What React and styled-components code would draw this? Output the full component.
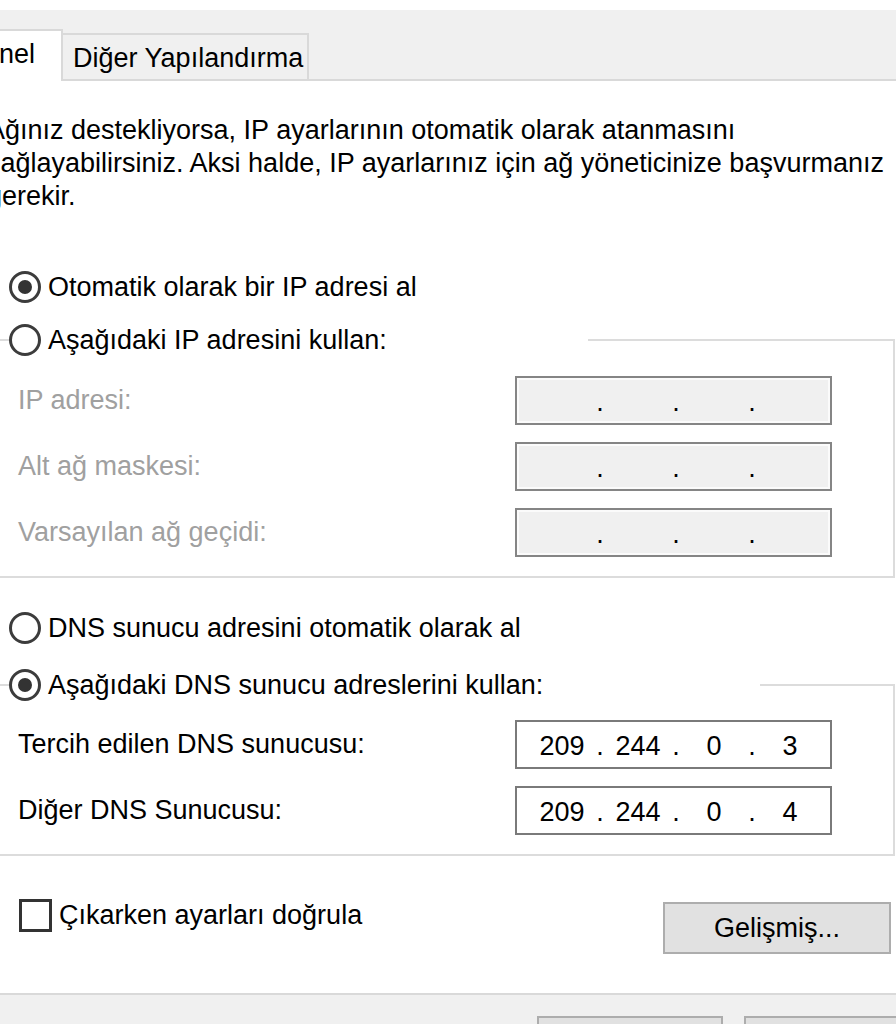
import styled, { createGlobalStyle } from "styled-components";

const GlobalStyle = createGlobalStyle`
  html, body {
    margin: 0;
    padding: 0;
    background: #fff;
  }
  body {
    font-family: "Liberation Sans", Arial, sans-serif;
    font-size: 27px;
    color: #000;
  }
`;

const Window = styled.div`
  width: 896px;
  height: 1024px;
  overflow: hidden;
  background: #fff;
  display: flex;
  flex-direction: column;
`;

const TabStrip = styled.div`
  margin-top: 10px;
  height: 69px;
  flex-shrink: 0;
  background: #f0f0f0;
  border-bottom: 2px solid #d9d9d9;
  display: flex;
  align-items: flex-end;
`;

const Tab = styled.div`
  box-sizing: border-box;
  position: relative;
  line-height: 33px;
  white-space: nowrap;
  border: 2px solid #d9d9d9;
  border-bottom: none;
  border-left: ${(p) => (p.$active ? "2px solid #d9d9d9" : "none")};
  background: ${(p) => (p.$active ? "#fff" : "#f0f0f0")};
  height: ${(p) => (p.$active ? "52px" : "46px")};
  width: ${(p) => (p.$active ? "auto" : "246px")};
  padding: ${(p) => (p.$active ? "7px 26px 0 15px" : "7px 0 0 10px")};
  margin-left: ${(p) => (p.$active ? "-54px" : "0")};
  margin-bottom: ${(p) => (p.$active ? "-2px" : "0")};
  z-index: ${(p) => (p.$active ? 1 : 0)};
`;

const Panel = styled.div`
  box-sizing: border-box;
  height: 914px;
  flex-shrink: 0;
  padding-top: 33px;
  background: #fff;
  border-bottom: 2px solid #d9d9d9;
`;

const Intro = styled.p`
  margin: 0 0 0 -13px;
  line-height: 33px;
  white-space: nowrap;
`;

const RadioRow = styled.div`
  display: flex;
  align-items: center;
  gap: 7px;
  height: 34px;
  margin-top: ${(p) => p.$top || 0}px;
  padding-left: ${(p) => (p.$legend ? 0 : 9)}px;
  white-space: nowrap;
`;

const RadioCircle = styled.span`
  box-sizing: border-box;
  width: 32px;
  height: 32px;
  flex-shrink: 0;
  border: 3px solid #3c3c3c;
  border-radius: 50%;
  background: #fff;
  display: flex;
  align-items: center;
  justify-content: center;
  &::after {
    content: "";
    width: 14px;
    height: 14px;
    border-radius: 50%;
    background: ${(p) => (p.$checked ? "#333" : "transparent")};
  }
`;

const Group = styled.fieldset`
  margin: ${(p) => p.$top}px 1px 0 -13px;
  padding: ${(p) => p.$padTop}px 0 19px;
  min-width: 0;
  border: 2px solid #dcdcdc;
  border-left: none;
`;

const Legend = styled.legend`
  margin-left: 22px;
  padding: 0;
  width: ${(p) => p.$width}px;
`;

const FieldList = styled.div`
  display: flex;
  flex-direction: column;
  gap: 17px;
`;

const FieldRow = styled.div`
  display: grid;
  grid-template-columns: 1fr 317px;
  align-items: center;
  padding: 0 61px 0 31px;
  height: 49px;
`;

const FieldLabel = styled.span`
  line-height: 33px;
  white-space: nowrap;
  color: ${(p) => (p.$disabled ? "#a0a0a0" : "#000")};
`;

const IpBox = styled.div`
  box-sizing: border-box;
  height: 49px;
  padding: 3px 0 0 12px;
  display: grid;
  grid-template-columns: 66px 10px 66px 10px 66px 10px 66px;
  align-items: center;
  line-height: 33px;
  border: 2px solid ${(p) => (p.$disabled ? "#858585" : "#7a7a7a")};
  background: ${(p) => (p.$disabled ? "#f0f0f0" : "#fff")};
  box-shadow: ${(p) => (p.$disabled ? "inset 0 0 0 2px #fbfbfb" : "none")};
`;

const Octet = styled.span`
  text-align: center;
`;

const Dot = styled.span`
  text-align: center;
`;

const BottomRow = styled.div`
  margin-top: 42px;
  padding: 0 5px 0 19px;
  display: flex;
  justify-content: space-between;
  align-items: flex-start;
`;

const CheckLabel = styled.div`
  display: flex;
  align-items: center;
  gap: 7px;
  height: 34px;
  white-space: nowrap;
`;

const CheckBox = styled.span`
  box-sizing: border-box;
  width: 33px;
  height: 33px;
  border: 3px solid #333;
  background: #fff;
`;

const Button = styled.div`
  box-sizing: border-box;
  flex-shrink: 0;
  width: ${(p) => p.$width}px;
  height: 52px;
  margin-top: ${(p) => p.$top || 0}px;
  background: #e1e1e1;
  border: 2px solid #adadad;
  display: flex;
  align-items: center;
  justify-content: center;
  white-space: nowrap;
`;

const Footer = styled.div`
  flex: 1;
  background: #f0f0f0;
  display: flex;
  justify-content: flex-end;
  gap: 21px;
  padding-top: 21px;
  margin-right: -34px;
`;

function Radio({ checked, legend, top, children }) {
  return (
    <RadioRow $legend={legend} $top={top}>
      <RadioCircle $checked={checked} />
      <span>{children}</span>
    </RadioRow>
  );
}

function IpField({ label, value, disabled }) {
  const parts = value ? value.split(".") : ["", "", "", ""];
  return (
    <FieldRow>
      <FieldLabel $disabled={disabled}>{label}</FieldLabel>
      <IpBox $disabled={disabled}>
        <Octet>{parts[0]}</Octet>
        <Dot>.</Dot>
        <Octet>{parts[1]}</Octet>
        <Dot>.</Dot>
        <Octet>{parts[2]}</Octet>
        <Dot>.</Dot>
        <Octet>{parts[3]}</Octet>
      </IpBox>
    </FieldRow>
  );
}

export default function App() {
  return (
    <>
      <GlobalStyle />
      <Window>
        <TabStrip>
          <Tab $active>Genel</Tab>
          <Tab>Diğer Yapılandırma</Tab>
        </TabStrip>
        <Panel>
          <Intro>
            Ağınız destekliyorsa, IP ayarlarının otomatik olarak atanmasını
            <br />
            sağlayabilirsiniz. Aksi halde, IP ayarlarınız için ağ yöneticinize başvurmanız
            <br />
            gerekir.
          </Intro>

          <Radio checked top={57}>
            Otomatik olarak bir IP adresi al
          </Radio>
          <Group $top={19} $padTop={19}>
            <Legend $width={579}>
              <Radio legend>Aşağıdaki IP adresini kullan:</Radio>
            </Legend>
            <FieldList>
              <IpField label="IP adresi:" disabled />
              <IpField label="Alt ağ maskesi:" disabled />
              <IpField label="Varsayılan ağ geçidi:" disabled />
            </FieldList>
          </Group>

          <Radio top={33}>DNS sunucu adresini otomatik olarak al</Radio>
          <Group $top={23} $padTop={18}>
            <Legend $width={751}>
              <Radio checked legend>
                Aşağıdaki DNS sunucu adreslerini kullan:
              </Radio>
            </Legend>
            <FieldList>
              <IpField label="Tercih edilen DNS sunucusu:" value="209.244.0.3" />
              <IpField label="Diğer DNS Sunucusu:" value="209.244.0.4" />
            </FieldList>
          </Group>

          <BottomRow>
            <CheckLabel>
              <CheckBox />
              <span>Çıkarken ayarları doğrula</span>
            </CheckLabel>
            <Button $width={228} $top={4}>
              Gelişmiş...
            </Button>
          </BottomRow>
        </Panel>
        <Footer>
          <Button $width={186}>Tamam</Button>
          <Button $width={186}>İptal</Button>
        </Footer>
      </Window>
    </>
  );
}
